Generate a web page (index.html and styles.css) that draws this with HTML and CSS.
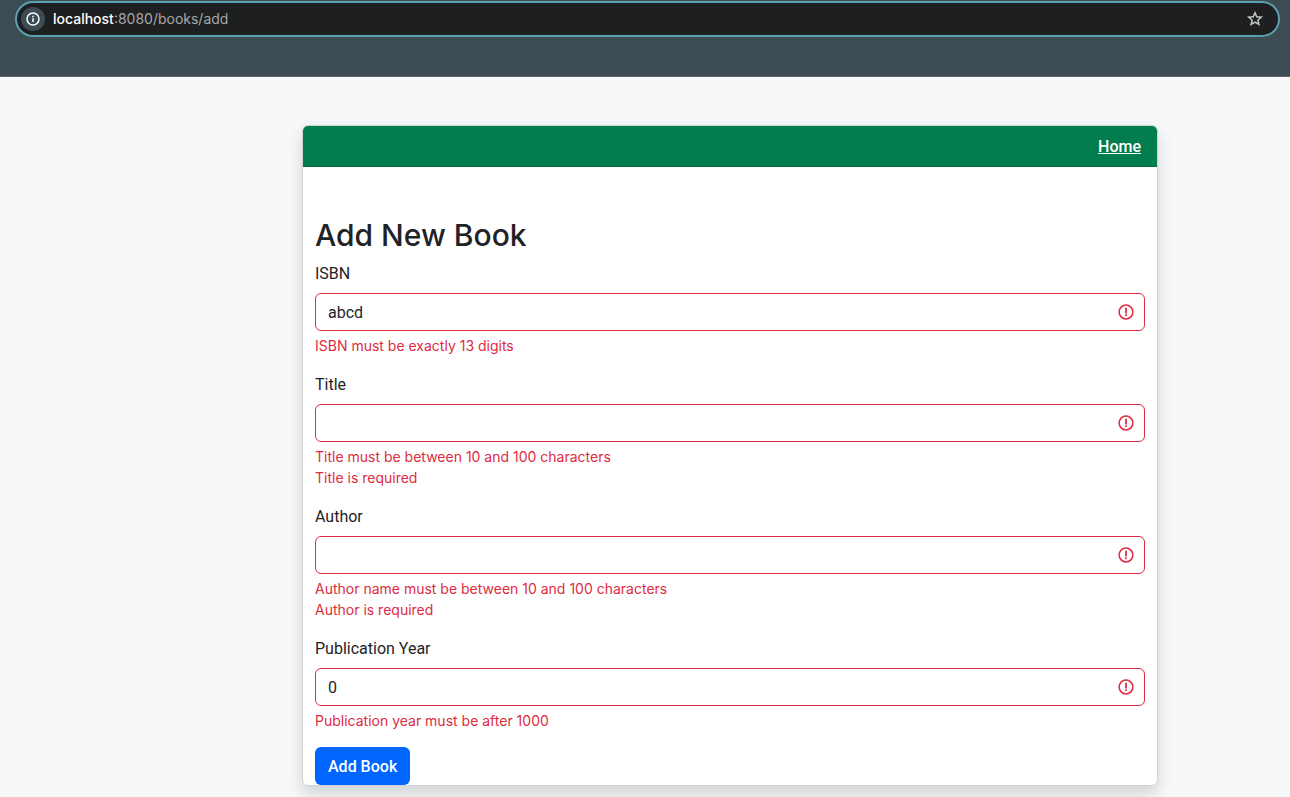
FILE: index.html
```html
<!DOCTYPE html>
<html lang="en">
<head>
<meta charset="utf-8">
<meta name="viewport" content="width=device-width, initial-scale=1">
<title>Add New Book</title>
<link rel="stylesheet" href="styles.css">
</head>
<body>
<svg class="sprite" aria-hidden="true">
  <symbol id="alert" viewBox="0 0 12 12">
    <circle cx="6" cy="6" r="4.6" fill="none" stroke="currentColor" stroke-width="1"/>
    <path d="M6 3.6v2.9" fill="none" stroke="currentColor" stroke-width="1.2" stroke-linecap="round"/>
    <circle cx="6" cy="8.2" r="0.7" fill="currentColor"/>
  </symbol>
</svg>
<header class="toolbar">
  <div class="address">
    <button class="site-info" type="button" aria-label="Site information">
      <svg viewBox="0 0 24 24" width="24" height="24" fill="none" stroke="currentColor">
        <circle cx="12" cy="12" r="6" stroke-width="1.5"/>
        <path d="M12 11.3v3.7M12 8.8v1.5" stroke-width="1.5"/>
      </svg>
    </button>
    <div class="url"><span class="host">localhost</span>:8080/books/add</div>
    <button class="bookmark" type="button" aria-label="Bookmark this page">
      <svg viewBox="0 0 18 18" width="18" height="18" fill="none" stroke="currentColor" stroke-width="1.5">
        <path d="M9 2.7l1.75 4.1 4.5.4-3.4 2.95 1 4.35L9 12.2l-3.85 2.3 1-4.35-3.4-2.95 4.5-.4z"/>
      </svg>
    </button>
  </div>
</header>
<main class="page">
  <section class="card">
    <nav class="card-header"><a href="#">Home</a></nav>
    <form class="form">
      <h2 class="heading">Add New Book</h2>
      <div class="field">
        <label for="isbn">ISBN</label>
        <div class="control"><input id="isbn" type="text" value="abcd"><svg class="alert"><use href="#alert"/></svg></div>
        <div class="feedback"><p>ISBN must be exactly 13 digits</p></div>
      </div>
      <div class="field">
        <label for="title">Title</label>
        <div class="control"><input id="title" type="text"><svg class="alert"><use href="#alert"/></svg></div>
        <div class="feedback"><p>Title must be between 10 and 100 characters</p><p>Title is required</p></div>
      </div>
      <div class="field">
        <label for="author">Author</label>
        <div class="control"><input id="author" type="text"><svg class="alert"><use href="#alert"/></svg></div>
        <div class="feedback"><p>Author name must be between 10 and 100 characters</p><p>Author is required</p></div>
      </div>
      <div class="field">
        <label for="year">Publication Year</label>
        <div class="control"><input id="year" type="text" value="0"><svg class="alert"><use href="#alert"/></svg></div>
        <div class="feedback"><p>Publication year must be after 1000</p></div>
      </div>
      <button class="submit" type="submit">Add Book</button>
    </form>
  </section>
</main>
</body>
</html>
```
FILE: styles.css
```css
* {
  box-sizing: border-box;
}

body {
  margin: 0;
  background: #f7f8fa;
  color: #1f2327;
  font: 16px/24px Roboto, "Liberation Sans", sans-serif;
}

.sprite {
  position: absolute;
  width: 0;
  height: 0;
}

.toolbar {
  padding: 1px 10px 39px 15px;
  background: #3c4c53;
  border-bottom: 1px solid #62696f;
}

.address {
  display: flex;
  align-items: center;
  height: 36px;
  padding: 0 14px 0 4px;
  border: 2px solid #5c9fb1;
  border-radius: 18px;
  background: #1e1f21;
}

.site-info,
.bookmark {
  display: flex;
  padding: 0;
  border: 0;
  border-radius: 50%;
  background: none;
  color: #c4c7c8;
}

.site-info {
  background: #3c4c53;
  color: #fff;
}

.url {
  flex: 1;
  padding-left: 8px;
  color: #a6a8a8;
  font-size: 14px;
  font-family: Inter, sans-serif;
}

.host {
  color: #fff;
  font-weight: 500;
}

.page {
  padding: 48px 132px 11px 302px;
}

.card {
  background: #fff;
  border: 1px solid #d0d2d3;
  border-radius: 6px;
  box-shadow: 0 8px 16px rgba(0, 0, 0, 0.15);
}

.card-header {
  padding: 8px 16px 6px;
  border-bottom: 1px solid #026b43;
  border-radius: 5px 5px 0 0;
  background: #027d4d;
  line-height: 26px;
  text-align: right;
}

.card-header a {
  color: #fff;
  font-weight: 500;
}

.form {
  padding: 48px 12px 0;
}

.heading {
  margin: 0 0 6px;
  font-family: Inter, sans-serif;
  font-size: 30px;
  line-height: 40px;
  font-weight: 500;
}

.field {
  margin-bottom: 16px;
}

label {
  display: block;
  margin-bottom: 6px;
  line-height: 26px;
}

.control {
  position: relative;
}

.control input {
  display: block;
  width: 100%;
  height: 38px;
  padding: 6px 36px 6px 12px;
  border: 1px solid #de2b42;
  border-radius: 6px;
  background: #fff;
  color: inherit;
  font: inherit;
}

.alert {
  position: absolute;
  top: 10px;
  right: 10px;
  width: 18px;
  height: 18px;
  color: #de2b42;
}

.feedback {
  margin-top: 4px;
  color: #de2b42;
  font-family: Inter, sans-serif;
  font-size: 14px;
  line-height: 21px;
}

.feedback p {
  margin: 0;
}

.submit {
  display: block;
  height: 38px;
  padding: 7px 13px 5px;
  border: 0;
  border-radius: 6px;
  background: #0066ff;
  color: #fff;
  font: inherit;
  font-weight: 500;
}
```
